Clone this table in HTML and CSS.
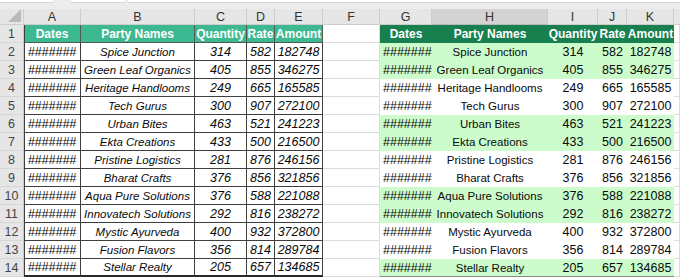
FILE: index.html
```html
<!DOCTYPE html>
<html>
<head>
<meta charset="utf-8">
<link rel="stylesheet" href="styles.css">
</head>
<body>
<div class="topbar"><div class="box b1"></div><div class="box b2"></div><div class="box b3"></div></div>
<div class="sheet">
  <div class="corner"><div class="tri"></div></div>
  <div class="ch">A</div><div class="ch">B</div><div class="ch">C</div><div class="ch">D</div><div class="ch">E</div><div class="ch">F</div><div class="ch">G</div><div class="ch sel">H</div><div class="ch">I</div><div class="ch">J</div><div class="ch">K</div><div class="ch end"></div>

  <div class="rh">1</div>
  <div class="lh la">Dates</div><div class="lh">Party Names</div><div class="lh">Quantity</div><div class="lh">Rate</div><div class="lh">Amount</div>
  <div class="c"></div>
  <div class="rhd">Dates</div><div class="rhd">Party Names</div><div class="rhd">Quantity</div><div class="rhd">Rate</div><div class="rhd">Amount</div>
  <div class="c"></div>

  <div class="rh">2</div>
  <div class="ld la hs">#######</div><div class="ld nm">Spice Junction</div><div class="ld">314</div><div class="ld">582</div><div class="ld">182748</div>
  <div class="c"></div>
  <div class="rd g hash">#######</div><div class="rd g nm">Spice Junction</div><div class="rd g">314</div><div class="rd g">582</div><div class="rd g">182748</div>
  <div class="c"></div>

  <div class="rh">3</div>
  <div class="ld la hs">#######</div><div class="ld nm">Green Leaf Organics</div><div class="ld">405</div><div class="ld">855</div><div class="ld">346275</div>
  <div class="c"></div>
  <div class="rd g hash">#######</div><div class="rd g nm">Green Leaf Organics</div><div class="rd g">405</div><div class="rd g">855</div><div class="rd g">346275</div>
  <div class="c"></div>

  <div class="rh">4</div>
  <div class="ld la hs">#######</div><div class="ld nm">Heritage Handlooms</div><div class="ld">249</div><div class="ld">665</div><div class="ld">165585</div>
  <div class="c"></div>
  <div class="rd hash">#######</div><div class="rd nm">Heritage Handlooms</div><div class="rd">249</div><div class="rd">665</div><div class="rd">165585</div>
  <div class="c"></div>

  <div class="rh">5</div>
  <div class="ld la hs">#######</div><div class="ld nm">Tech Gurus</div><div class="ld">300</div><div class="ld">907</div><div class="ld">272100</div>
  <div class="c"></div>
  <div class="rd hash">#######</div><div class="rd nm">Tech Gurus</div><div class="rd">300</div><div class="rd">907</div><div class="rd">272100</div>
  <div class="c"></div>

  <div class="rh">6</div>
  <div class="ld la hs">#######</div><div class="ld nm">Urban Bites</div><div class="ld">463</div><div class="ld">521</div><div class="ld">241223</div>
  <div class="c"></div>
  <div class="rd g hash">#######</div><div class="rd g nm">Urban Bites</div><div class="rd g">463</div><div class="rd g">521</div><div class="rd g">241223</div>
  <div class="c"></div>

  <div class="rh">7</div>
  <div class="ld la hs">#######</div><div class="ld nm">Ekta Creations</div><div class="ld">433</div><div class="ld">500</div><div class="ld">216500</div>
  <div class="c"></div>
  <div class="rd g hash">#######</div><div class="rd g nm">Ekta Creations</div><div class="rd g">433</div><div class="rd g">500</div><div class="rd g">216500</div>
  <div class="c"></div>

  <div class="rh">8</div>
  <div class="ld la hs">#######</div><div class="ld nm">Pristine Logistics</div><div class="ld">281</div><div class="ld">876</div><div class="ld">246156</div>
  <div class="c"></div>
  <div class="rd hash">#######</div><div class="rd nm">Pristine Logistics</div><div class="rd">281</div><div class="rd">876</div><div class="rd">246156</div>
  <div class="c"></div>

  <div class="rh">9</div>
  <div class="ld la hs">#######</div><div class="ld nm">Bharat Crafts</div><div class="ld">376</div><div class="ld">856</div><div class="ld">321856</div>
  <div class="c"></div>
  <div class="rd hash">#######</div><div class="rd nm">Bharat Crafts</div><div class="rd">376</div><div class="rd">856</div><div class="rd">321856</div>
  <div class="c"></div>

  <div class="rh">10</div>
  <div class="ld la hs">#######</div><div class="ld nm">Aqua Pure Solutions</div><div class="ld">376</div><div class="ld">588</div><div class="ld">221088</div>
  <div class="c"></div>
  <div class="rd g hash">#######</div><div class="rd g nm">Aqua Pure Solutions</div><div class="rd g">376</div><div class="rd g">588</div><div class="rd g">221088</div>
  <div class="c"></div>

  <div class="rh">11</div>
  <div class="ld la hs">#######</div><div class="ld nm">Innovatech Solutions</div><div class="ld">292</div><div class="ld">816</div><div class="ld">238272</div>
  <div class="c"></div>
  <div class="rd g hash">#######</div><div class="rd g nm">Innovatech Solutions</div><div class="rd g">292</div><div class="rd g">816</div><div class="rd g">238272</div>
  <div class="c"></div>

  <div class="rh">12</div>
  <div class="ld la hs">#######</div><div class="ld nm">Mystic Ayurveda</div><div class="ld">400</div><div class="ld">932</div><div class="ld">372800</div>
  <div class="c"></div>
  <div class="rd hash">#######</div><div class="rd nm">Mystic Ayurveda</div><div class="rd">400</div><div class="rd">932</div><div class="rd">372800</div>
  <div class="c"></div>

  <div class="rh">13</div>
  <div class="ld la hs">#######</div><div class="ld nm">Fusion Flavors</div><div class="ld">356</div><div class="ld">814</div><div class="ld">289784</div>
  <div class="c"></div>
  <div class="rd hash">#######</div><div class="rd nm">Fusion Flavors</div><div class="rd">356</div><div class="rd">814</div><div class="rd">289784</div>
  <div class="c"></div>

  <div class="rh">14</div>
  <div class="ld la hs last">#######</div><div class="ld nm last">Stellar Realty</div><div class="ld last">205</div><div class="ld last">657</div><div class="ld last">134685</div>
  <div class="c"></div>
  <div class="rd g hash rlast">#######</div><div class="rd g nm rlast">Stellar Realty</div><div class="rd g rlast">205</div><div class="rd g rlast">657</div><div class="rd g rlast">134685</div>
  <div class="c"></div>
</div>
</body>
</html>
```
FILE: styles.css
```css
html, body {
  margin: 0;
  padding: 0;
  background: #ffffff;
  font-family: "Liberation Sans", Arial, sans-serif;
  color: #0a0a0a;
}
.topbar {
  display: flex;
  height: 9px;
  background: #ececec;
}
.box {
  height: 2px;
  background: #fff;
  border-bottom: 1px solid #d4d4d4;
}
.b1 { width: 53px; margin-right: 18px; }
.b2 { width: 54px; margin-right: 3px; }
.b3 { flex: 1; }
.sheet {
  display: grid;
  grid-template-columns: 24px 57px 114px 52px 28px 48px 57px 52px 116px 50px 29px 47px 6px;
  grid-template-rows: 16px repeat(14, 18px);
}
.sheet > div {
  box-sizing: border-box;
  display: flex;
  align-items: center;
  justify-content: center;
  white-space: nowrap;
  overflow: hidden;
  font-size: 12.5px;
}
.corner {
  background: #e6e6e6;
  border-right: 1px solid #cfcfcf;
  border-bottom: 1px solid #cfcfcf;
  justify-content: flex-end !important;
  align-items: flex-end !important;
  padding: 0 2px 2px 0;
}
.tri {
  width: 13px;
  height: 13px;
  background: #b9b9b9;
  clip-path: polygon(100% 0, 100% 100%, 0 100%);
}
.ch {
  background: #e6e6e6;
  color: #333;
  border-right: 1px solid #cdcdcd;
  border-bottom: 1px solid #cdcdcd;
}
.ch.sel {
  background: #d3d3d3;
  border-bottom: 1px solid #b8b8b8;
}
.ch.end { border-right: none; }
.rh {
  background: #e6e6e6;
  color: #444;
  border-right: 1px solid #c8c8c8;
  border-bottom: 1px solid #d6d6d6;
}
.c {
  border-right: 1px solid #dcdcdc;
  border-bottom: 1px solid #dcdcdc;
}
.sheet > .lh {
  background: #3db991;
  color: #fff;
  font-weight: bold;
  font-size: 12px;
  border-right: 1px solid #4d5b57;
  border-bottom: 1px solid #4d5b57;
}
.ld {
  font-style: italic;
  border-right: 1px solid #3e3e3e;
  border-bottom: 1px solid #3e3e3e;
}
.la { box-shadow: inset 1px 0 0 #3e3e3e; }
.sheet > .nm { font-size: 11.5px; }
.ld.last { border-bottom: 2px solid #2a2a2a; }
.sheet > .rhd {
  background: #18804f;
  color: #fff;
  font-weight: bold;
  font-size: 12px;
}
.rd { background: #fff; }
.rd.g { background: #ccfccc; }
.sheet > .hash {
  justify-content: flex-start;
  padding-left: 3px;
}
.rd.rlast { border-bottom: 1px solid #8a8a8a; }
```
